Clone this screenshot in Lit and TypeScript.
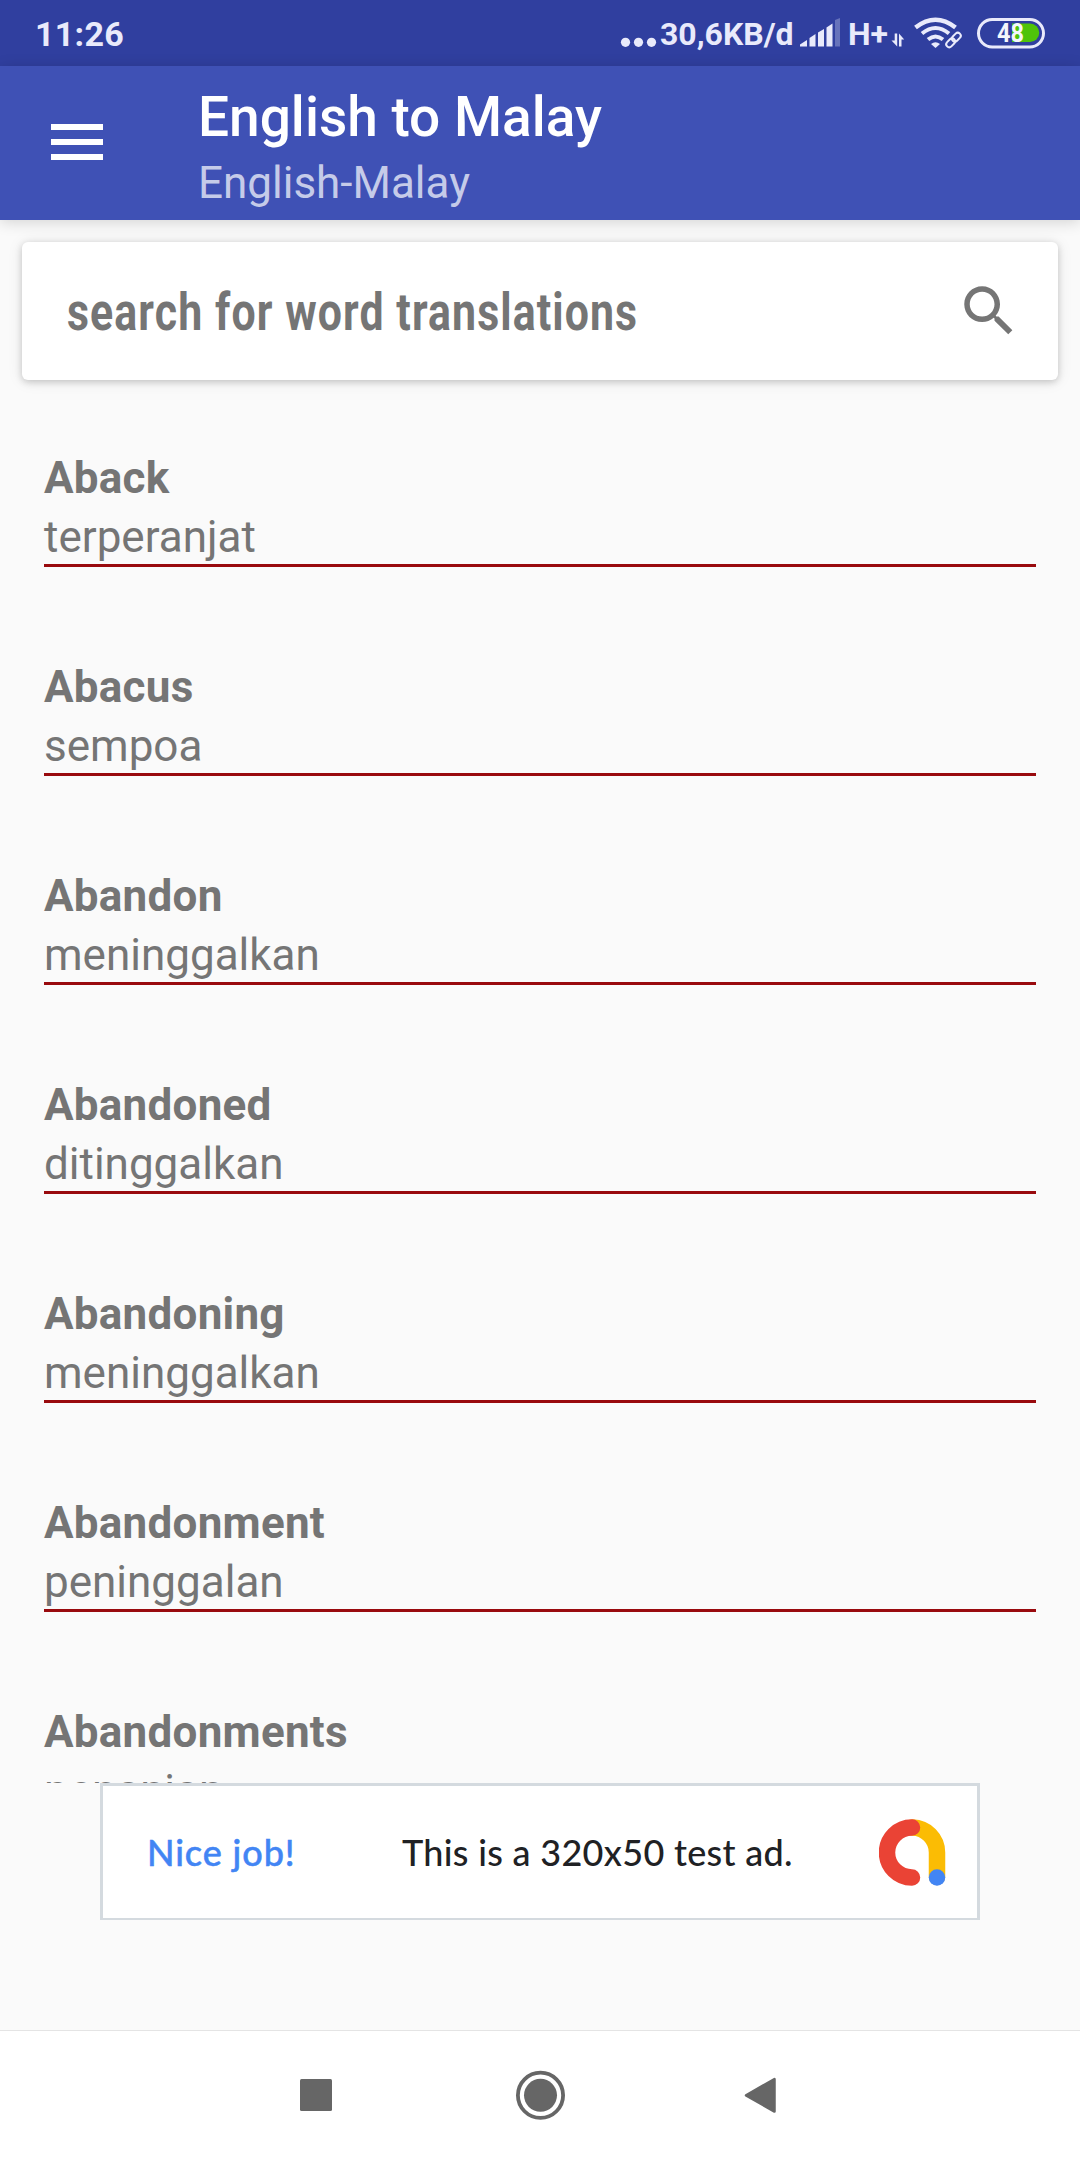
import { LitElement, html, css } from "lit";
import { customElement, property } from "lit/decorators.js";

interface Entry {
  word: string;
  translation: string;
}

const ENTRIES: Entry[] = [
  { word: "Aback", translation: "terperanjat" },
  { word: "Abacus", translation: "sempoa" },
  { word: "Abandon", translation: "meninggalkan" },
  { word: "Abandoned", translation: "ditinggalkan" },
  { word: "Abandoning", translation: "meninggalkan" },
  { word: "Abandonment", translation: "peninggalan" },
  { word: "Abandonments", translation: "penanjan" },
];

@customElement("status-bar")
class StatusBar extends LitElement {
  static styles = css`
    :host {
      display: flex;
      flex: none;
      align-items: flex-start;
      height: 66px;
      box-sizing: border-box;
      padding: 0 35px;
      background: #303f9f;
      color: #e9eafb;
      font: 700 32px/68px Roboto, sans-serif;
      white-space: nowrap;
    }
    svg {
      display: block;
      flex: none;
      height: 66px;
    }
    .time {
      font-size: 34px;
      letter-spacing: 0.3px;
      margin-right: auto;
    }
    .rate {
      width: 140px;
    }
    .network {
      width: 42px;
    }
    .battery text {
      font: 700 26px Roboto, sans-serif;
    }
    .signal {
      margin-right: 7px;
    }
  `;

  render() {
    return html`
      <span class="time">11:26</span>
      <svg width="40" viewBox="0 0 40 66" fill="#e9eafb">
        <circle cx="5.500" cy="42.300" r="4.600" />
        <circle cx="18.500" cy="42.300" r="4.600" />
        <circle cx="31.500" cy="42.300" r="4.600" />
      </svg>
      <span class="rate">30,6KB/d</span>
      <svg class="signal" width="41" viewBox="0 0 41 66" fill="#e9eafb">
        <path d="M0 46.500V44.500L7 40V46.500Z" />
        <path d="M9.500 46.500V38L15.500 34V46.500Z" />
        <path d="M18 46.500V32.500L24 29V46.500Z" />
        <path d="M26.500 46.500V27.500L32.500 23.500V46.500Z" />
        <path d="M35 46.500V20L40 18V46.500Z" opacity="0.3" />
      </svg>
      <span class="network">H+</span>
      <svg width="24" viewBox="0 0 24 66" fill="#e9eafb">
        <path d="M4.700 33.500H7.200V46.500L1.500 40.500H4.700ZM9 46.500V33.500L14.200 39.500H11.500V46.500Z" />
      </svg>
      <svg width="63" viewBox="0 0 63 66" fill="none" stroke="#e9eafb" stroke-width="4">
        <path d="M1.500 27.500Q21.500 12 41.500 27.500" stroke-width="4.500" />
        <path d="M8 33.500Q21.500 22.500 35 33.500" />
        <path d="M14 39.500Q21.500 33.500 29 39.500" />
        <path d="M17 44Q21.500 40.500 26 44L21.500 48Z" fill="#e9eafb" stroke="none" />
        <g stroke-width="2" transform="translate(39.500 40) rotate(-45)">
          <rect x="-9" y="-3" width="10" height="6" rx="3" />
          <rect x="-1" y="-3" width="10" height="6" rx="3" />
        </g>
      </svg>
      <svg class="battery" width="68" viewBox="0 0 68 66">
        <path d="M35 23.500H53A9.250 9.250 0 0 1 53 42H35Z" fill="#4fc30a" />
        <rect x="1.500" y="19.500" width="65" height="27.500" rx="13.700" fill="none" stroke="#e9eafb" stroke-width="3" />
        <text x="33.500" y="41.800" text-anchor="middle" textLength="27" lengthAdjust="spacingAndGlyphs" fill="#f4f6fb">48</text>
      </svg>
    `;
  }
}

@customElement("app-bar")
class AppBar extends LitElement {
  static styles = css`
    :host {
      display: flex;
      flex: none;
      align-items: center;
      height: 154px;
      box-sizing: border-box;
      padding-left: 51px;
      gap: 95px;
      background: #3f51b5;
      box-shadow: 0 2px 14px rgba(0, 0, 0, 0.16);
      font-family: Roboto, sans-serif;
    }
    svg {
      display: block;
      margin-bottom: 3px;
    }
    .title {
      font-size: 55px;
      font-weight: 500;
      line-height: 65px;
      color: #fff;
    }
    .subtitle {
      font-size: 44px;
      line-height: 52px;
      color: #c5cbe9;
      margin-top: 7px;
    }
    .titles {
      display: flex;
      flex-direction: column;
      margin-top: 7px;
      white-space: nowrap;
    }
  `;

  render() {
    return html`
      <svg width="52" height="36" viewBox="0 0 52 36" fill="#fff">
        <path d="M0 0H52V6H0ZM0 15H52V21H0ZM0 30H52V36H0Z" />
      </svg>
      <div class="titles">
        <span class="title">English to Malay</span>
        <span class="subtitle">English-Malay</span>
      </div>
    `;
  }
}

@customElement("search-card")
class SearchCard extends LitElement {
  static styles = css`
    :host {
      display: flex;
      flex: none;
      align-items: center;
      justify-content: space-between;
      height: 138px;
      box-sizing: border-box;
      margin: 22px 22px 0;
      padding: 0 36px 0 45px;
      border-radius: 6px;
      background: #fff;
      box-shadow: 0 2px 7px rgba(0, 0, 0, 0.18), 0 1px 16px rgba(0, 0, 0, 0.09);
      color: #757575;
      font: 700 51px/60px Roboto, sans-serif;
    }
    .hint {
      display: block;
      margin-top: 4px;
      letter-spacing: 1.3px;
      transform: scaleX(0.84);
      transform-origin: left;
      white-space: nowrap;
    }
    svg {
      display: block;
    }
  `;

  render() {
    return html`
      <span class="hint">search for word translations</span>
      <svg width="66" height="66" viewBox="0 0 24 24" fill="#757575">
        <path
          d="M15.500 14h-.79l-.28-.27C15.410 12.590 16 11.110 16 9.500 16 5.910 13.090 3 9.500 3S3 5.910 3 9.500 5.910 16 9.500 16c1.610 0 3.090-.59 4.230-1.570l.27.28v.79l5 4.990L20.490 19l-4.990-5zm-6 0C7.010 14 5 11.990 5 9.500S7.010 5 9.500 5 14 7.010 14 9.500 11.990 14 9.500 14z"
        />
      </svg>
    `;
  }
}

@customElement("word-entry")
class WordEntry extends LitElement {
  @property({ attribute: false }) entry!: Entry;

  static styles = css`
    :host {
      display: flex;
      flex: none;
      flex-direction: column;
      height: 209px;
      box-sizing: border-box;
      padding: 69px 44px 22px;
      color: #757575;
      font: 400 44px/59px Roboto, sans-serif;
    }
    .word {
      height: 59px;
      font-weight: 700;
      letter-spacing: 0.25px;
    }
    .translation {
      height: 56px;
      border-bottom: 3px solid #990a0e;
    }
  `;

  render() {
    return html`
      <div class="word">${this.entry.word}</div>
      <div class="translation">${this.entry.translation}</div>
    `;
  }
}

@customElement("ad-banner")
class AdBanner extends LitElement {
  static styles = css`
    :host {
      display: flex;
      flex: none;
      align-items: center;
      width: 880px;
      height: 137px;
      box-sizing: border-box;
      margin: 0 auto 110px;
      border: 3px solid #d4dadf;
      border-bottom-width: 2px;
      padding: 0 31px 0 44px;
      background: #fff;
      font: 500 36px/44px Lato, sans-serif;
      white-space: nowrap;
    }
    .praise {
      color: #4285f4;
      width: 255px;
      letter-spacing: 0.9px;
      -webkit-text-stroke: 0.5px #4285f4;
    }
    .message {
      color: #202124;
      margin-right: auto;
      letter-spacing: 0.3px;
    }
    svg {
      display: block;
    }
  `;

  render() {
    return html`
      <span class="praise">Nice job!</span>
      <span class="message">This is a 320x50 test ad.</span>
      <svg width="67" height="67" viewBox="0 0 67 67" fill="none" stroke-width="16.500" stroke-linecap="round">
        <path d="M33.500 8.500A25 25 0 0 1 58 33.500V58" stroke="#fbbc04" />
        <path d="M33 8.500A25 25 0 0 0 33 58.500" stroke="#ea4335" />
        <circle cx="58" cy="58.500" r="8.250" fill="#4285f4" />
      </svg>
    `;
  }
}

@customElement("nav-bar")
class NavBar extends LitElement {
  static styles = css`
    :host {
      display: flex;
      flex: none;
      align-items: flex-start;
      height: 130px;
      box-sizing: border-box;
      padding: 39px 0 0 300px;
      border-top: 1px solid #e4e4e4;
      background: #fff;
    }
    svg {
      display: block;
    }
    .home {
      margin: 0 179px 0 184px;
    }
  `;

  render() {
    return html`
      <svg width="32" height="50" viewBox="0 0 32 50" fill="#666">
        <rect y="9" width="32" height="32" rx="1.500" />
      </svg>
      <svg class="home" width="49" height="50" viewBox="0 0 49 50">
        <circle cx="24.500" cy="25.300" r="22.600" fill="none" stroke="#666" stroke-width="3.800" />
        <circle cx="24.500" cy="25.300" r="16.500" fill="#666" />
      </svg>
      <svg width="32" height="50" viewBox="0 0 32 50">
        <path d="M2 25.300L30.500 9V41.600Z" fill="#666" stroke="#666" stroke-width="2.500" stroke-linejoin="round" />
      </svg>
    `;
  }
}

@customElement("app-root")
class AppRoot extends LitElement {
  static styles = css`
    :host {
      display: flex;
      flex-direction: column;
      width: 1080px;
      height: 2160px;
      overflow: hidden;
      background: #fafafa;
    }
    .list {
      display: flex;
      flex: 1;
      flex-direction: column;
      min-height: 0;
      overflow: hidden;
    }
  `;

  render() {
    return html`
      <status-bar></status-bar>
      <app-bar></app-bar>
      <search-card></search-card>
      <div class="list">${ENTRIES.map((e) => html`<word-entry .entry=${e}></word-entry>`)}</div>
      <ad-banner></ad-banner>
      <nav-bar></nav-bar>
    `;
  }
}
